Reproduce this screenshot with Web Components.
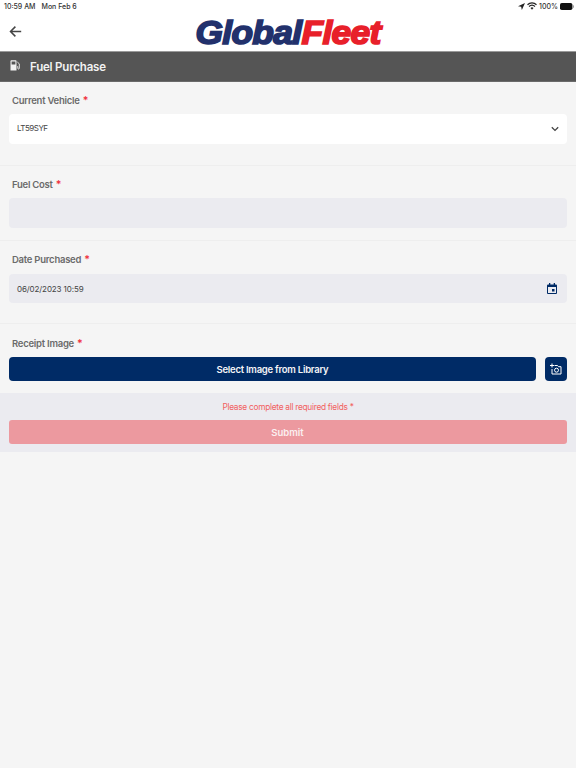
<!DOCTYPE html>
<html><head><meta charset="utf-8"><style>
html,body{margin:0;padding:0;background:#f5f5f5;height:100%}
body{font-family:Inter,"Liberation Sans",sans-serif;width:576px;height:768px;overflow:hidden}
</style></head><body>
<app-page></app-page>
<script>
function def(name,css,html){
  customElements.define(name,class extends HTMLElement{
    constructor(){super();const s=this.attachShadow({mode:'open'});
      s.innerHTML='<style>'+css+'</style>'+(typeof html==='function'?html(this):html);}
  });
}
def('status-bar',`:host{display:flex;justify-content:space-between;align-items:center;height:12px;padding:0 2px 0 4px;font:500 7px Inter,sans-serif;color:#333}
.l{display:flex;gap:6px}.r{display:flex;gap:2px;align-items:center}svg{display:block}`,
`<div class="l"><span>10:59 AM</span><span>Mon Feb 6</span></div>
<div class="r"><svg width="7" height="7" viewBox="0 0 10 10" style="margin-right:0"><path d="M10 0 0 4.5l4.5 1L5.5 10z" fill="#222"/></svg>
<svg width="10" height="8" viewBox="0 0 20 16"><path d="M1 5.5a13 13 0 0 1 18 0M4 9a9 9 0 0 1 12 0" fill="none" stroke="#222" stroke-width="2.4"/><path d="M7 12a4.5 4.5 0 0 1 6 0l-3 3.5z" fill="#222"/></svg>
<span>100%</span>
<svg width="14" height="7" viewBox="0 0 14 7"><rect x="0" y="0" width="12.4" height="7" rx="1.8" fill="#111"/><rect x="12.8" y="2.2" width="1" height="2.6" rx=".5" fill="#888"/></svg></div>`);
def('app-logo',`:host{display:block;font:italic 900 33px/32px "Liberation Sans",Arial,sans-serif;letter-spacing:-.6px;white-space:nowrap;-webkit-text-stroke:1.7px currentColor;color:#22316c;transform:translate(.5px,1px) scaleX(1.07);transform-origin:center}
b{color:#e8202a;font-weight:900}`,`Global<b>Fleet</b>`);
def('app-header',`:host{display:block;background:#fff;height:51px;border-bottom:1px solid #9a9a9a;box-sizing:content-box}
.row{display:flex;align-items:center;height:39px;position:relative;justify-content:center;box-sizing:border-box}
.back{position:absolute;left:9px;top:13px}svg{display:block}`,
`<status-bar></status-bar><div class="row"><svg class="back" width="13" height="13" viewBox="0 0 13 13"><path d="M12.2 6.5H1.6M6.4 1.6 1.5 6.5l4.9 4.9" fill="none" stroke="#444" stroke-width="1.5"/></svg><app-logo></app-logo></div>`);
def('title-bar',`:host{display:flex;align-items:center;height:29px;background:#555;color:#f2f2f2;padding-left:10px;gap:10px;font:600 11.5px Inter,sans-serif;letter-spacing:-.2px;border-bottom:1px solid #6a6a6a}
svg{display:block;margin-top:-3px}`,
`<svg width="10" height="11" viewBox="0 0 10 11"><path d="M.5 1.2C.5.6 1 .2 1.500.2h4c.5 0 1 .4 1 1V10.500H.5z" fill="#f2f2f2"/><rect x="1.600" y="1.500" width="3.800" height="3" fill="#555"/><path d="M7.300 2 9.300 3.800V8.300c0 1-1.500 1-1.500 0V6.500H7.300" fill="none" stroke="#f2f2f2" stroke-width=".9"/></svg><slot></slot>`);
def('form-section',`:host{display:block;padding:13px 9px 21px;border-bottom:1px solid #eeeeee}
:host([last]){border-bottom:0;padding:14px 9px 12px}
.lab{font:600 9.500px/12px Inter,sans-serif;color:#6b6b6b;padding-left:3px;margin-bottom:var(--gap,7px);height:12px;letter-spacing:-.25px}
i{font-style:normal;color:#f0333f;margin-left:1px;font-size:10.5px}`,
el=>`<div class="lab">${el.getAttribute('label')} <i>*</i></div><slot></slot>`);
def('field-box',`:host{display:flex;align-items:center;justify-content:space-between;height:var(--h,30px);border-radius:4px;background:#ebebf0;padding:0 8px;font:400 8px Inter,sans-serif;letter-spacing:-.1px;color:#444;box-sizing:border-box}
:host([white]){background:#fff;letter-spacing:-.5px;padding-bottom:2px}`,`<slot></slot><slot name="icon"></slot>`);
def('fill-button',`:host{display:flex;align-items:center;justify-content:center;height:24px;border-radius:4px;background:#002b66;color:#f4f4f6;font:600 9.500px Inter,sans-serif;letter-spacing:-.25px}`,`<slot></slot>`);
def('form-footer',`:host{display:block;background:#ebebf0;padding:9px 9px 8px;text-align:center;color:#f2605f;font:400 8.300px/11px Inter,sans-serif;letter-spacing:-.27px}
.m{height:18px}
.s{height:24px;background:#ec999f;border-radius:3px;display:flex;align-items:center;justify-content:center;color:#fbeff0;font:600 9.500px Inter,sans-serif;letter-spacing:0;padding-right:1px}`,
`<div class="m">Please complete all required fields *</div><div class="s">Submit</div>`);
def('image-row',`:host{display:flex;gap:9px}
.ic{width:22px;flex:none}svg{display:block}`,
`<fill-button style="flex:1">Select Image from Library</fill-button><fill-button class="ic"><svg width="12" height="12" viewBox="0 0 12 12"><path d="M4.500 2.500H7.500L8.500 3.700H11V11H2V6" fill="none" stroke="#fff" stroke-width="1"/><circle cx="6.500" cy="7.200" r="2" fill="none" stroke="#fff" stroke-width="1"/><path d="M2 .5V4.500M0 2.500H4" stroke="#fff" stroke-width="1"/></svg></fill-button>`);
def('app-page',`:host{display:block;background:#f5f5f5;height:768px}`,
`<app-header></app-header><title-bar>Fuel Purchase</title-bar>
<form-section label="Current Vehicle"><field-box white>LT59SYF<svg slot="icon" width="8" height="6" viewBox="0 0 8 6" style="margin:2px 0 0"><path d="M.8 1.200 4 4.400 7.200 1.200" fill="none" stroke="#444" stroke-width="1.300"/></svg></field-box></form-section>
<form-section label="Fuel Cost" style="padding-bottom:12px"><field-box></field-box></form-section>
<form-section label="Date Purchased" style="padding-bottom:20px;--gap:8px;--h:29px"><field-box>06/02/2023 10:59<svg slot="icon" width="10" height="11" viewBox="0 0 10 11" style="margin-right:2px"><path d="M1 1.500H9a1 1 0 0 1 1 1V10a1 1 0 0 1-1 1H1a1 1 0 0 1-1-1V2.500a1 1 0 0 1 1-1Z" fill="#002b66"/><rect x="2" y="0" width="1.300" height="2.500" fill="#002b66"/><rect x="6.700" y="0" width="1.300" height="2.500" fill="#002b66"/><rect x="1" y="4" width="8" height="6" fill="#ebebf0"/><rect x="5" y="6" width="2.500" height="2.500" fill="#002b66"/></svg></field-box></form-section>
<form-section label="Receipt Image" last><image-row></image-row></form-section>
<form-footer></form-footer>`);
</script></body></html>
